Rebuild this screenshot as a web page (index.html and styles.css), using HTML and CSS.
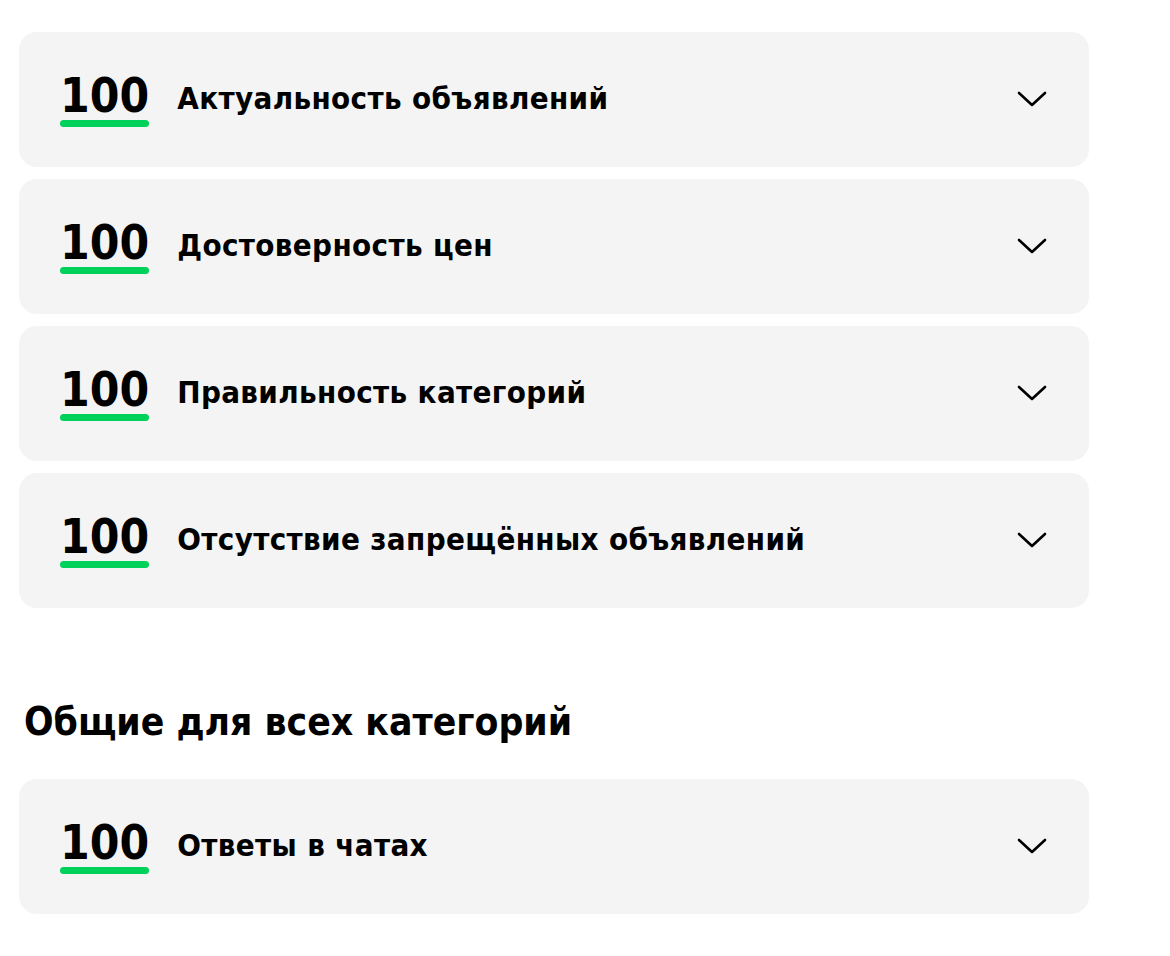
FILE: index.html
```html
<!DOCTYPE html>
<html lang="ru">
<head>
  <meta charset="UTF-8" />
  <meta name="viewport" content="width=device-width, initial-scale=1.0"/>
  <title>Рейтинг качества</title>
  <link rel="stylesheet" href="styles.css">
</head>
<body>
  <div class="container">
    <div class="list">
      <div class="item">
        <div class="score">
          <span class="score-value">100</span>
          <span class="score-bar"></span>
        </div>
        <div class="item-title">Актуальность объявлений</div>
        <svg class="chevron" viewBox="0 0 30 17" width="30" height="17"><path d="M2 2 L15 14 L28 2" /></svg>
      </div>
      <div class="item">
        <div class="score">
          <span class="score-value">100</span>
          <span class="score-bar"></span>
        </div>
        <div class="item-title">Достоверность цен</div>
        <svg class="chevron" viewBox="0 0 30 17" width="30" height="17"><path d="M2 2 L15 14 L28 2" /></svg>
      </div>
      <div class="item">
        <div class="score">
          <span class="score-value">100</span>
          <span class="score-bar"></span>
        </div>
        <div class="item-title">Правильность категорий</div>
        <svg class="chevron" viewBox="0 0 30 17" width="30" height="17"><path d="M2 2 L15 14 L28 2" /></svg>
      </div>
      <div class="item">
        <div class="score">
          <span class="score-value">100</span>
          <span class="score-bar"></span>
        </div>
        <div class="item-title">Отсутствие запрещённых объявлений</div>
        <svg class="chevron" viewBox="0 0 30 17" width="30" height="17"><path d="M2 2 L15 14 L28 2" /></svg>
      </div>
    </div>

    <h2 class="section-title">Общие для всех категорий</h2>

    <div class="list">
      <div class="item">
        <div class="score">
          <span class="score-value">100</span>
          <span class="score-bar"></span>
        </div>
        <div class="item-title">Ответы в чатах</div>
        <svg class="chevron" viewBox="0 0 30 17" width="30" height="17"><path d="M2 2 L15 14 L28 2" /></svg>
      </div>
    </div>
  </div>
</body>
</html>
```

FILE: styles.css
```css
* {
  box-sizing: border-box;
}

body {
  margin: 0;
  background: #ffffff;
  color: #000000;
  font-family: 'DejaVu Sans Condensed', 'DejaVu Sans', sans-serif;
  font-weight: 700;
}

.container {
  width: 1070px;
  margin-left: 19px;
  padding-top: 32px;
}

.list {
  display: flex;
  flex-direction: column;
  gap: 12px;
}

.item {
  display: flex;
  align-items: center;
  height: 135px;
  padding: 0 42px 0 41px;
  background: #f4f4f4;
  border-radius: 18px;
}

.score {
  display: flex;
  flex-direction: column;
  align-items: stretch;
  margin-right: 28px;
}

.score-value {
  font-size: 47.5px;
  line-height: 48px;
}

.score-bar {
  height: 7px;
  border-radius: 4px;
  background: #00d15a;
}

.item-title {
  flex: 1;
  font-size: 31px;
  line-height: 36px;
  letter-spacing: 0.35px;
  margin-bottom: 4px;
}

.chevron {
  fill: none;
  stroke: #000000;
  stroke-width: 2.6;
  stroke-linecap: round;
  stroke-linejoin: round;
}

.section-title {
  margin: 87px 0 30px 5px;
  font-size: 38.7px;
  line-height: 54px;
}
```
